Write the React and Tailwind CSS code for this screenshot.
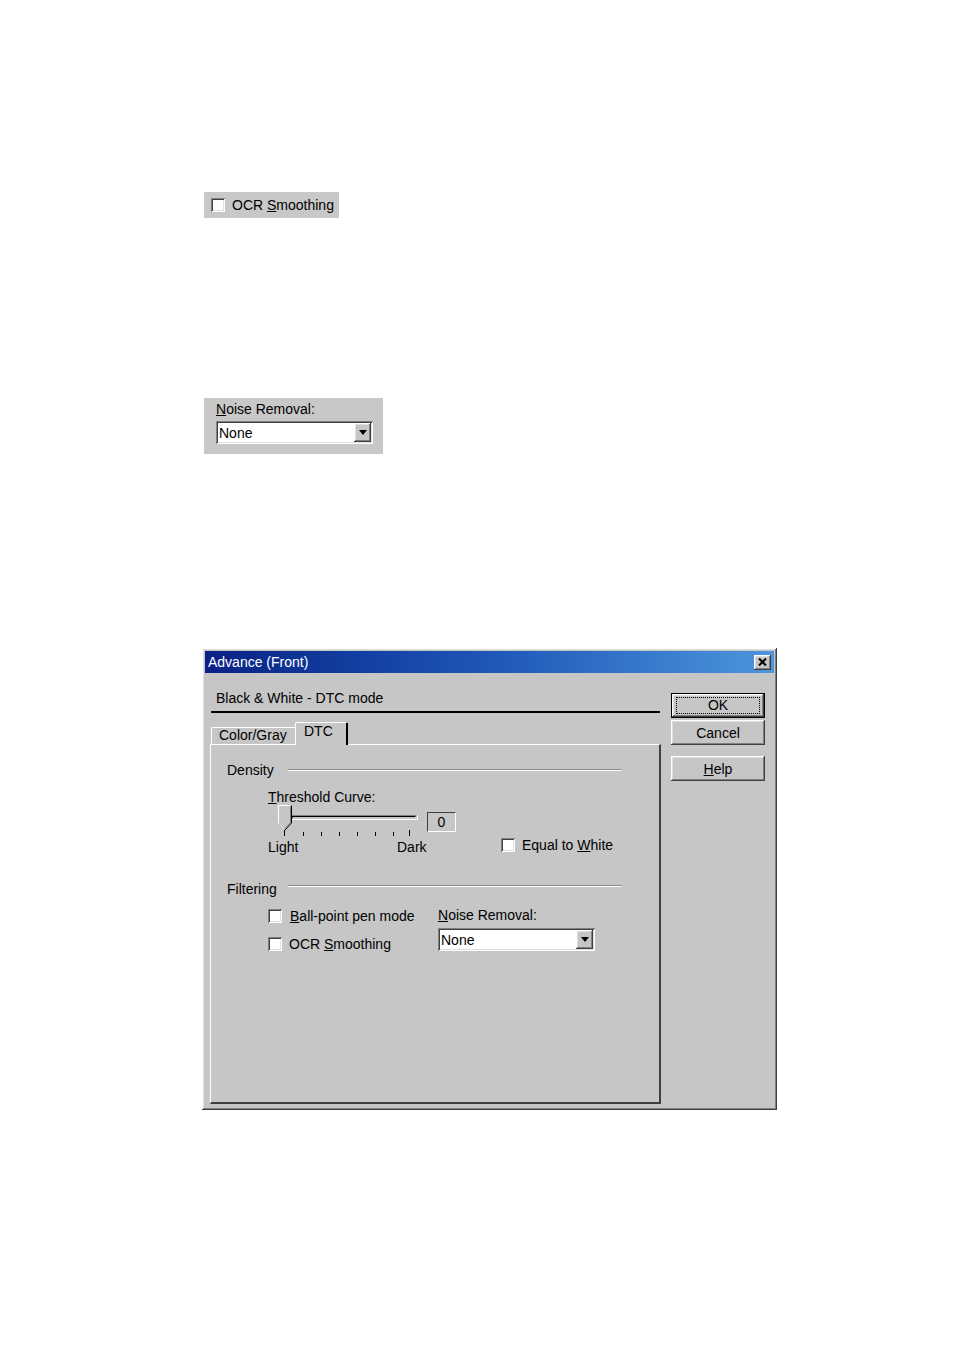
import React from 'react';

const raised = 'shadow-[inset_-1px_-1px_0_#404040,inset_1px_1px_0_#ffffff,inset_-2px_-2px_0_#808080,inset_2px_2px_0_#dfdfdf]';
const sunken = 'shadow-[inset_1px_1px_0_#808080,inset_-1px_-1px_0_#ffffff,inset_2px_2px_0_#404040,inset_-2px_-2px_0_#dfdfdf]';

const Checkbox = () => (
  <span className={`block w-[14px] h-[14px] bg-white shrink-0 ${sunken}`} />
);

const Combo = () => (
  <div className={`relative w-[157px] h-[23px] bg-white ${sunken} flex items-center`}>
    <span className="pl-[3px] text-[14px] leading-none">None</span>
    <div className={`absolute right-[2px] top-[2px] w-[17px] h-[19px] bg-[#c6c6c6] ${raised} flex items-center justify-center`}>
      <svg width="8" height="5" viewBox="0 0 8 5">
        <path d="M0 0h8L4 5z" fill="#000" />
      </svg>
    </div>
  </div>
);

const Groove = ({ w }) => (
  <div className={`${w} h-[2px] border-t border-[#8a8a8a] border-b border-b-white`} />
);

const Slider = () => (
  <svg width="142" height="31" viewBox="0 0 142 31" className="shrink-0">
    {/* track */}
    <rect x="13" y="10" width="126" height="5" fill="#c6c6c6" />
    <path d="M13 14.5V10.5H138.5" stroke="#808080" fill="none" />
    <path d="M14 13.5V11.5H137.5" stroke="#000" fill="none" />
    <path d="M13 14.5H139.5V10" stroke="#fff" fill="none" />
    {/* ticks */}
    {[6, 25, 43, 61, 79, 97, 115, 131].map((x, i) => (
      <line key={x} x1={x + 0.5} x2={x + 0.5} y1={i === 0 || i === 7 ? 25 : 27} y2="31" stroke="#000" />
    ))}
    {/* thumb */}
    <path d="M0.5 0.5H13.5V18L7 25L0.5 18Z" fill="#c6c6c6" />
    <path d="M0.5 18V0.5H12.5" stroke="#fff" fill="none" />
    <path d="M13.5 0.5V18L7 25" stroke="#000" fill="none" />
    <path d="M12.5 1.5V17.5L7 23.5" stroke="#808080" fill="none" />
    <path d="M0.5 18L6.5 24.5" stroke="#dfdfdf" fill="none" />
  </svg>
);

const Button = ({ children, isDefault, className = '' }) => (
  <div className={`w-[94px] h-[25px] bg-[#c6c6c6] flex items-center justify-center text-[14px] ${isDefault ? 'border border-black' : ''} ${raised} ${className}`}>
    {isDefault ? (
      <span className="flex items-center justify-center w-[84px] h-[17px] border border-dotted border-black pb-[1px]">{children}</span>
    ) : (
      children
    )}
  </div>
);

export default function App() {
  return (
    <div className="w-[954px] h-[1351px] bg-white overflow-hidden text-black font-['Liberation_Sans',Arial,sans-serif] text-[14px] leading-none">
      {/* OCR smoothing snippet */}
      <div className="ml-[204px] pt-[192px]">
        <div className="w-[135px] h-[26px] bg-[#c8c8c8] flex items-center pl-[7px] gap-[7px]">
          <Checkbox />
          <span>OCR <u>S</u>moothing</span>
        </div>
      </div>

      {/* Noise removal snippet */}
      <div className="ml-[204px] mt-[180px] w-[179px] h-[56px] bg-[#c8c8c8] pl-[12px] pt-[3px]">
        <div className="h-[16px] flex items-center"><span><u>N</u>oise Removal:</span></div>
        <div className="mt-[4px]"><Combo /></div>
      </div>

      {/* Dialog */}
      <div className={`ml-[202px] mt-[194px] w-[575px] h-[462px] bg-[#c6c6c6] p-[3px] ${raised}`}>
        <div className="h-[22px] bg-gradient-to-r from-[#0a2186] via-[#1f56b8] to-[#4c96dc] flex items-center justify-between pl-[3px] pr-[3px]">
          <span className="text-white text-[14px]">Advance (Front)</span>
          <div className={`w-[17px] h-[15px] bg-[#c6c6c6] ${raised} flex items-center justify-center`}>
            <svg width="9" height="8" viewBox="0 0 9 8">
              <path d="M1 0.5L8 7.5M8 0.5L1 7.5" stroke="#000" strokeWidth="2" />
            </svg>
          </div>
        </div>

        <div className="flex">
          {/* left column */}
          <div className="ml-[5px] w-[451px]">
            <div className="mt-[17px] h-[16px] flex items-center pl-[6px]">Black &amp; White - DTC mode</div>
            <div className="mt-[5px] ml-[1px] w-[449px] h-[2px] bg-black" />

            {/* tabs */}
            <div className="mt-[9px] h-[22px] flex items-end pl-[1px]">
              <div className="w-[84px] h-[17px] border-t border-l border-white flex items-center pl-[7px] pb-[3px] rounded-tl-[2px]">
                Color/Gray
              </div>
              <div className="relative w-[53px] h-[23px] -mb-[1px] bg-[#c6c6c6] border-t border-l border-white border-r-2 border-r-black pl-[8px] pt-[1px] rounded-t-[2px]">
                DTC
              </div>
            </div>

            {/* panel */}
            <div className="w-[451px] h-[360px] border-t border-l border-white border-r-2 border-b-2 border-r-[#404040] border-b-[#404040]">
              <div className="mt-[17px] h-[16px] flex items-start">
                <span className="pl-[16px] w-[77px] leading-[16px]">Density</span>
                <div className="mt-[7px]"><Groove w="w-[334px]" /></div>
              </div>

              <div className="mt-[11px] h-[16px] pl-[57px] leading-[16px]"><u>T</u>hreshold Curve:</div>

              <div className="pl-[67px] flex items-start">
                <Slider />
                <div className="ml-[7px] mt-[7px] w-[29px] h-[20px] border-t border-l border-[#404040] border-r border-b border-r-white border-b-white flex items-center justify-center">0</div>
              </div>

              <div className="mt-[3px] h-[16px] flex items-center">
                <span className="pl-[57px] w-[186px]">Light</span>
                <span className="w-[104px]">Dark</span>
                <div className="flex items-center gap-[7px] -mt-[4px]">
                  <Checkbox />
                  <span>Equal to <u>W</u>hite</span>
                </div>
              </div>

              <div className="mt-[26px] h-[16px] flex items-start">
                <span className="pl-[16px] w-[77px] leading-[16px]">Filtering</span>
                <div className="mt-[4px]"><Groove w="w-[334px]" /></div>
              </div>

              <div className="mt-[11px] flex">
                <div className="pl-[57px] w-[227px]">
                  <div className="h-[16px] flex items-center gap-[8px]">
                    <Checkbox />
                    <span><u>B</u>all-point pen mode</span>
                  </div>
                  <div className="mt-[12px] h-[16px] flex items-center gap-[7px]">
                    <Checkbox />
                    <span>OCR <u>S</u>moothing</span>
                  </div>
                </div>
                <div>
                  <div className="h-[16px] flex items-center -mt-[1px]"><span><u>N</u>oise Removal:</span></div>
                  <div className="mt-[5px]"><Combo /></div>
                </div>
              </div>
            </div>
          </div>

          {/* right column */}
          <div className="ml-[10px] pt-[20px] flex flex-col">
            <Button isDefault>OK</Button>
            <Button className="mt-[2px]">Cancel</Button>
            <Button className="mt-[11px]"><span><u>H</u>elp</span></Button>
          </div>
        </div>
      </div>
    </div>
  );
}
